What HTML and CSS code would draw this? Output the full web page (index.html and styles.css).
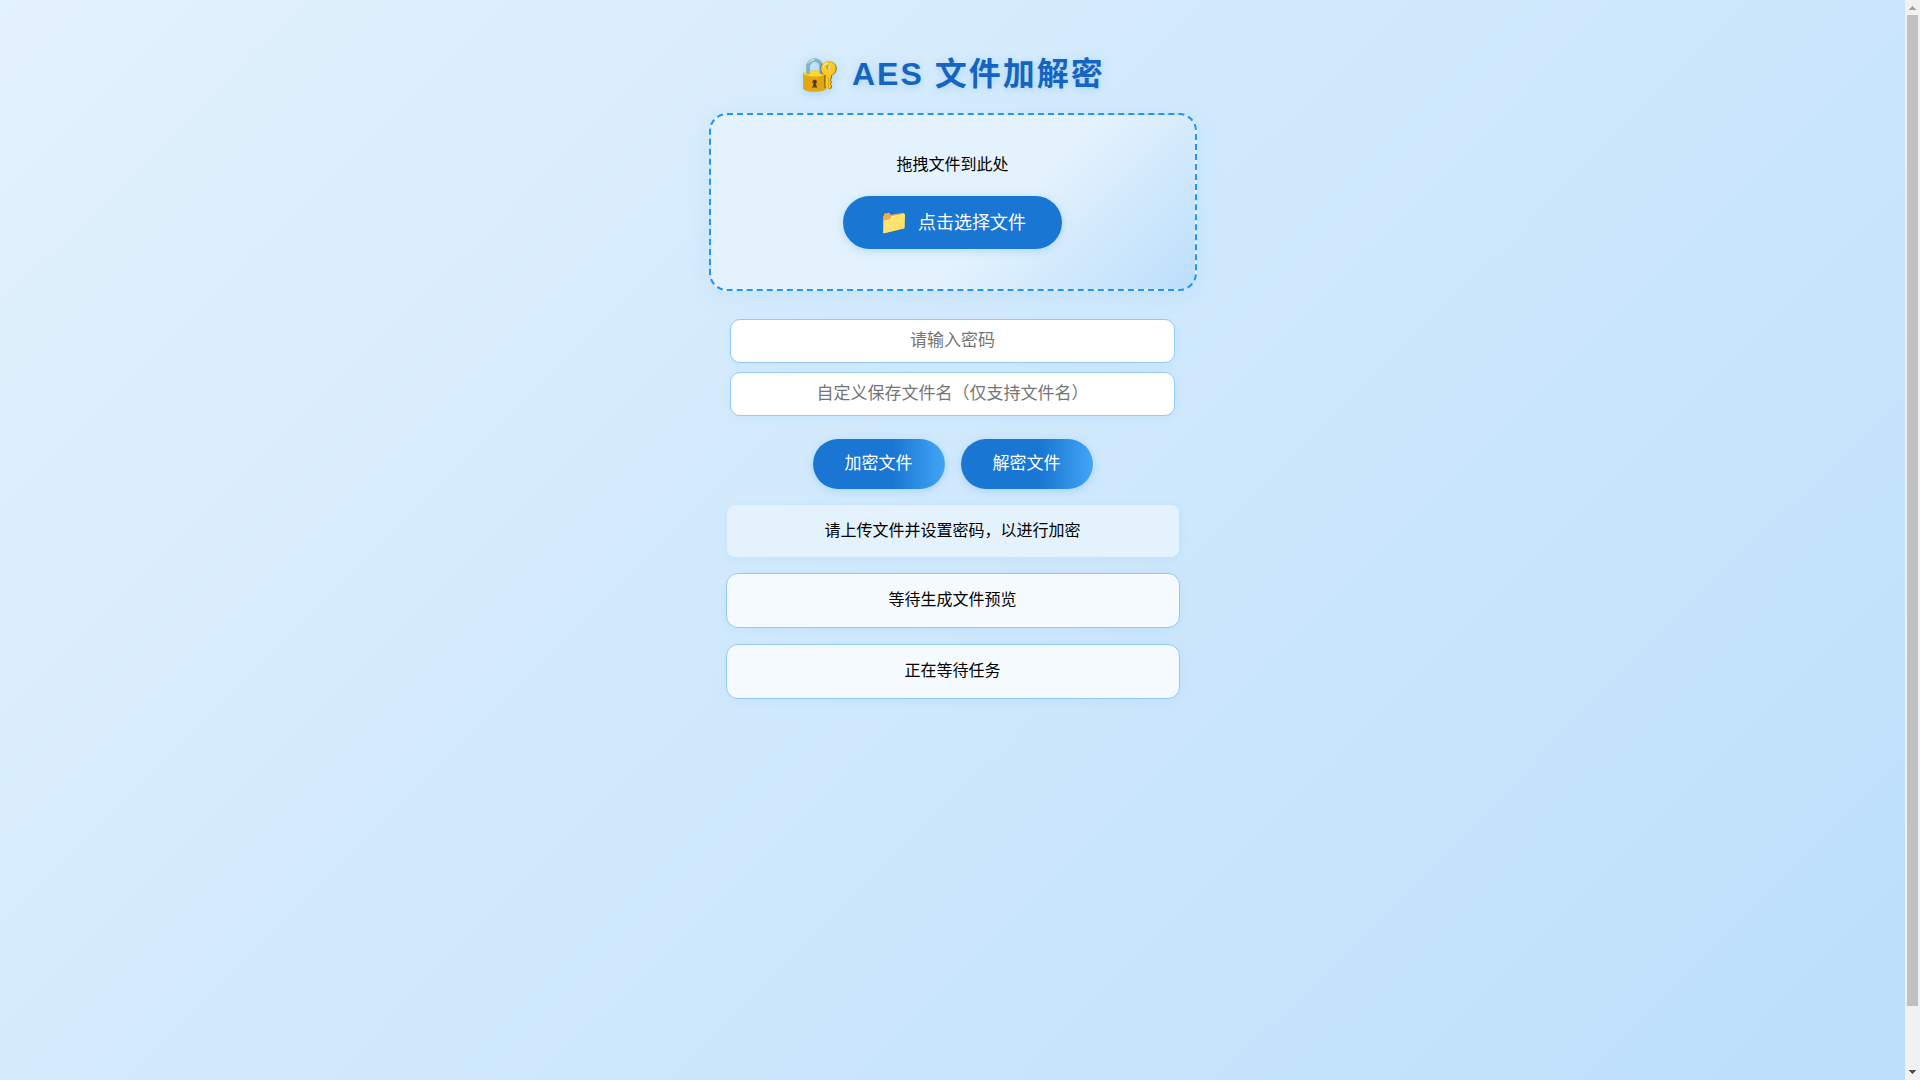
FILE: index.html
```
<!DOCTYPE html>
<html lang="zh-CN">
<head>
  <meta charset="UTF-8">
  <meta name="viewport" content="width=device-width, initial-scale=1.0">
  <title>AES 文件加解密</title>
  <link rel="stylesheet" href="styles.css">
</head>
<body>
  <main class="page">
    <h1>🔐 AES 文件加解密</h1>

    <div class="drop-zone" id="drop-zone">
      <p>拖拽文件到此处</p>
      <button type="button" class="file-button" id="choose-file"><span class="icon">📁</span>点击选择文件</button>
      <input type="file" id="file-input" aria-label="点击选择文件" hidden>
    </div>

    <form class="fields" id="aes-form">
      <input type="password" id="password" placeholder="请输入密码" aria-label="请输入密码" autocomplete="off">
      <input type="text" id="filename" placeholder="自定义保存文件名（仅支持文件名）" aria-label="自定义保存文件名（仅支持文件名）">
    </form>

    <div class="actions">
      <button type="button" class="action-button">加密文件</button>
      <button type="button" class="action-button">解密文件</button>
    </div>

    <div class="status" id="status">请上传文件并设置密码，以进行加密</div>
    <div class="panel" id="preview">等待生成文件预览</div>
    <div class="panel" id="progress">正在等待任务</div>
  </main>

  <div class="scrollbar" aria-hidden="true">
    <svg class="arrow" viewBox="0 0 15 15"><path d="M4 10h7v-1h-1v-1h-1v-1h-1v-1h-1v1h-1v1h-1v1h-1z" fill="#a3a3a3"/></svg>
    <div class="track"><div class="thumb"></div></div>
    <svg class="arrow" viewBox="0 0 15 15"><path d="M4 5h7v1h-1v1h-1v1h-1v1h-1v-1h-1v-1h-1v-1h-1z" fill="#505050"/></svg>
  </div>

  <script>
    // Open the file picker from the styled button
    document.getElementById('choose-file').addEventListener('click', () => {
      document.getElementById('file-input').click();
    });
  </script>
</body>
</html>
```
FILE: styles.css
```
body {
  font-family: "Liberation Sans", "Noto Sans CJK SC", sans-serif;
  font-size: 16px;
  line-height: 20px;
  margin: 0;
  height: 100vh;
  overflow: hidden;
  display: flex;
  color: #000;
}

.page {
  flex: 1;
  padding: 32px 16px;
  min-height: 100vh;
  display: flex;
  flex-direction: column;
  align-items: center;
  text-align: center;
  background: linear-gradient(135deg, #e3f2fd 0%, #bbdefb 100%);
}

h1 {
  margin: 23px 0 19px;
  font-size: 32px;
  line-height: 39px;
  letter-spacing: 2px;
  color: #1565c0;
  text-shadow: 0 2px 8px rgba(144, 202, 249, 0.7);
}

button,
input {
  font-family: inherit;
}

.drop-zone {
  box-sizing: border-box;
  width: 100%;
  max-width: 488px;
  padding: 40px 32px;
  border: 2px dashed #2196f3;
  border-radius: 18px;
  background: linear-gradient(135deg, #e3f2fd 60%, #bbdefb 100%);
  box-shadow: 0 4px 24px rgba(33, 150, 243, 0.08);
}

.drop-zone p {
  margin: 0 0 21px;
}

.file-button {
  display: inline-flex;
  align-items: center;
  gap: 9px;
  height: 53px;
  padding: 0 36px;
  border: none;
  border-radius: 30px;
  background: #1976d2;
  color: #fff;
  font-size: 18px;
  line-height: 20px;
  vertical-align: top;
  cursor: pointer;
  box-shadow: 0 2px 8px rgba(144, 202, 249, 0.6);
}

.icon {
  font-size: 24px;
  line-height: 24px;
  padding-bottom: 2px;
}

.fields {
  display: flex;
  flex-direction: column;
  gap: 9px;
  width: 100%;
  max-width: 445px;
  margin: 28px 0 23px;
}

.fields input {
  box-sizing: border-box;
  width: 100%;
  height: 44px;
  padding: 0 16px;
  border: 1px solid #90caf9;
  border-radius: 10px;
  background: #fff;
  font-size: 17px;
  text-align: center;
  box-shadow: 0 2px 8px rgba(33, 150, 243, 0.06);
}

.actions {
  display: flex;
  gap: 16px;
  margin-bottom: 16px;
}

.action-button {
  height: 50px;
  padding: 0 32px;
  border: none;
  border-radius: 25px;
  background: linear-gradient(90deg, #1976d2 60%, #42a5f5 100%);
  color: #fff;
  font-size: 17px;
  line-height: 20px;
  cursor: pointer;
  box-shadow: 0 2px 8px rgba(144, 202, 249, 0.6);
}

.status,
.panel {
  box-sizing: border-box;
  width: 100%;
  max-width: 454px;
  padding: 16px;
}

.status {
  max-width: 452px;
  border-radius: 8px;
  background: #e3f2fd;
  box-shadow: 0 2px 8px rgba(33, 150, 243, 0.08);
}

.panel {
  margin-top: 16px;
  min-height: 55px;
  border: 1px solid #90caf9;
  border-radius: 12px;
  background: #f5faff;
  box-shadow: 0 2px 12px rgba(33, 150, 243, 0.06);
}

/* Scrollbar */
.scrollbar {
  display: flex;
  flex-direction: column;
  width: 15px;
  background: #f1f1f1;
}

.arrow {
  display: block;
  width: 15px;
  height: 15px;
}

.track {
  flex: 1;
  padding: 0 2px;
}

.thumb {
  height: 94.4%;
  background: #c1c1c1;
}
```
